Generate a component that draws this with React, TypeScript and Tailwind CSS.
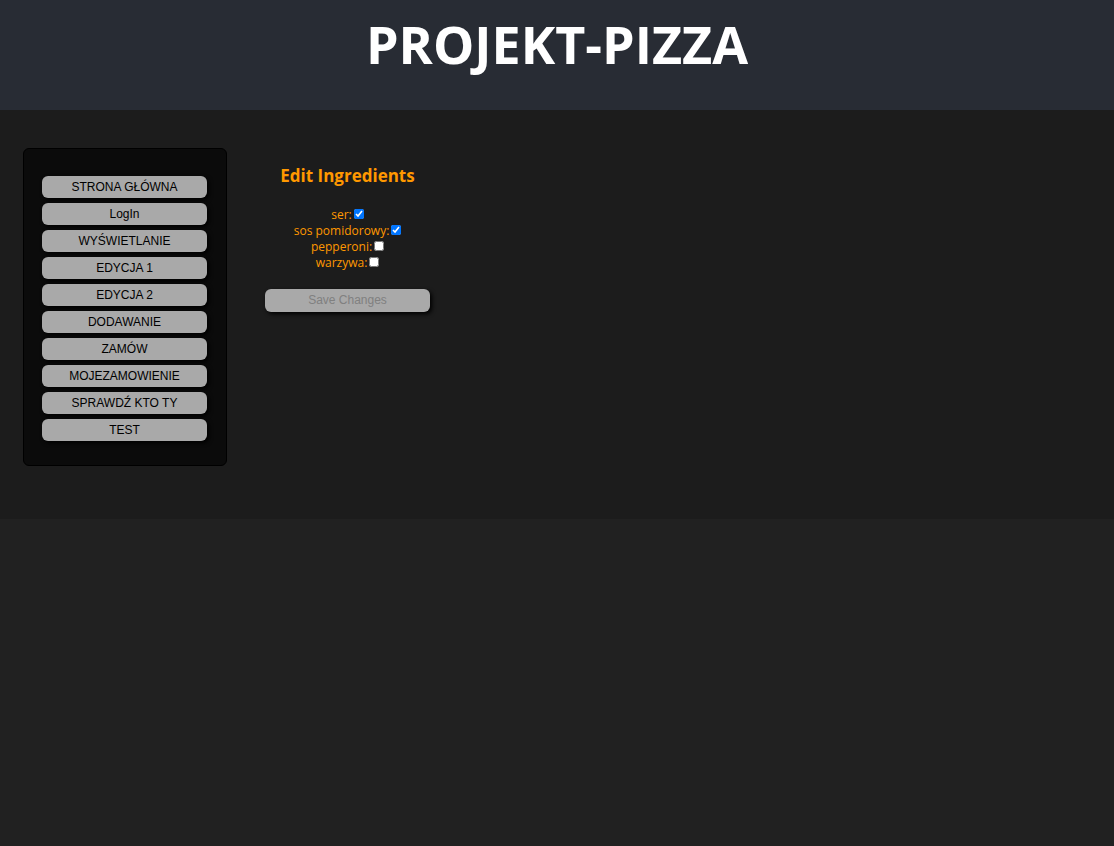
import { useState } from "react";

const menuItems = [
  "STRONA GŁÓWNA",
  "LogIn",
  "WYŚWIETLANIE",
  "EDYCJA 1",
  "EDYCJA 2",
  "DODAWANIE",
  "ZAMÓW",
  "MOJEZAMOWIENIE",
  "SPRAWDŹ KTO TY",
  "TEST",
];

const initialIngredients = [
  { name: "ser", selected: true },
  { name: "sos pomidorowy", selected: true },
  { name: "pepperoni", selected: false },
  { name: "warzywa", selected: false },
];

const buttonClass =
  "w-full rounded-md bg-[#a9a9a9] text-center font-['Liberation_Sans',sans-serif] text-xs shadow-[2px_2px_4px_#000000]";

export default function App() {
  const [ingredients, setIngredients] = useState(initialIngredients);

  const toggle = (name: string) =>
    setIngredients((list) =>
      list.map((item) => (item.name === name ? { ...item, selected: !item.selected } : item)),
    );

  return (
    <div className="min-h-screen bg-[#212121] font-['Open_Sans','Noto_Sans',sans-serif]">
      <header className="bg-[#282c34] pt-2 pb-[30px] text-center text-white">
        <h1 className="text-[52px] leading-[72px] font-bold">PROJEKT-PIZZA</h1>
      </header>
      <div className="flex items-start gap-5 bg-[#1c1c1c] px-[23px] pt-[38px] pb-[53px]">
        <nav className="flex w-51 shrink-0 flex-col gap-[5px] rounded-md border border-black bg-[#0b0b0b] pt-[27px] pr-[19px] pb-6 pl-[18px]">
          {menuItems.map((item) => (
            <button key={item} type="button" className={`${buttonClass} h-[22px] text-black`}>
              {item}
            </button>
          ))}
        </nav>
        <main className="w-[201px] px-[18px] pt-[13px] text-center text-[#ff9800]">
          <h2 className="text-[17px] leading-[30px] font-bold whitespace-nowrap">Edit Ingredients</h2>
          <form onSubmit={(event) => event.preventDefault()}>
            <div className="pt-4 pb-[15px]">
              {ingredients.map((item) => (
                <label key={item.name} className="flex h-4 items-start justify-center gap-0.5 text-xs leading-4">
                  {item.name}:
                  <input
                    type="checkbox"
                    className="mt-0.5 size-[10px]"
                    checked={item.selected}
                    onChange={() => toggle(item.name)}
                  />
                </label>
              ))}
            </div>
            <button type="submit" disabled className={`${buttonClass} h-[23px] text-[#808080]`}>
              Save Changes
            </button>
          </form>
        </main>
      </div>
    </div>
  );
}
